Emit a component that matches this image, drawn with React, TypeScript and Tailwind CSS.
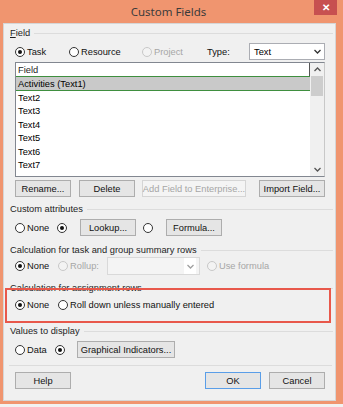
import React from "react";

const font = { fontFamily: '"Liberation Sans", Arial, sans-serif' };
const titleFont = { fontFamily: '"Noto Sans", "Segoe UI", sans-serif' };

function Radio({ checked, disabled }: { checked?: boolean; disabled?: boolean }) {
  return (
    <span
      className={`flex h-[10px] w-[10px] shrink-0 items-center justify-center rounded-full border ${
        disabled ? "border-[#c8c8c8] bg-[#f3f3f3]" : "border-[#333333] bg-white"
      }`}
    >
      {checked && <span className="h-[4px] w-[4px] rounded-full bg-[#111111]" />}
    </span>
  );
}

function Option({
  label,
  checked,
  disabled,
  w,
}: {
  label?: string;
  checked?: boolean;
  disabled?: boolean;
  w: string;
}) {
  return (
    <div className={`flex shrink-0 items-center gap-[2px] whitespace-nowrap ${w}`}>
      <Radio checked={checked} disabled={disabled} />
      {label && (
        <span className={disabled ? "text-[#a6a6a6]" : "text-[#111111]"}>{label}</span>
      )}
    </div>
  );
}

function Btn({
  children,
  w,
  disabled,
  focused,
}: {
  children: React.ReactNode;
  w: string;
  disabled?: boolean;
  focused?: boolean;
}) {
  const look = disabled
    ? "border-[#d5d5d5] bg-[#f4f4f4] text-[#a6a6a6]"
    : focused
    ? "border-[#5a9ee8] bg-[#e5e5e5] text-[#111111]"
    : "border-[#adadad] bg-[#e5e5e5] text-[#111111]";
  return (
    <div
      className={`flex h-[17px] shrink-0 items-center justify-center whitespace-nowrap border ${look} ${w}`}
    >
      {children}
    </div>
  );
}

function GroupLabel({ text, first }: { text: string; first?: boolean }) {
  return (
    <div className="ml-[-5px] mr-[-8px] flex h-[14px] items-center gap-[4px] whitespace-nowrap">
      <span className="text-[#1e1e1e]">
        {first ? (
          <>
            <span className="underline">F</span>ield
          </>
        ) : (
          text
        )}
      </span>
      <div className="h-px flex-1 bg-[#dcdcdc]" />
    </div>
  );
}

function Chevron({ up, color = "#555555" }: { up?: boolean; color?: string }) {
  return (
    <svg width="7" height="5" viewBox="0 0 7 5">
      <polyline
        points={up ? "0.5,4 3.5,1 6.5,4" : "0.5,1 3.5,4 6.5,1"}
        fill="none"
        stroke={color}
        strokeWidth="1.3"
      />
    </svg>
  );
}

const rows = ["Text2", "Text3", "Text4", "Text5", "Text6", "Text7", "Text8"];

export default function App() {
  return (
    <div className="h-[407px] w-[343px] overflow-hidden bg-[#f2f2f2]" style={font}>
      <div className="flex h-[404px] flex-col bg-[#f0956f]">
        {/* title bar */}
        <div className="flex h-[23px] shrink-0 items-start">
          <div
            className="flex h-[23px] flex-1 items-center justify-center pl-[23px] text-[11.5px] text-[#3b3b3b]"
            style={titleFont}
          >
            Custom Fields
          </div>
          <div className="flex h-[15px] w-[23px] items-center justify-center bg-[#c75050] text-[10px] font-bold text-white">
            ✕
          </div>
          <div className="w-[6px]" />
        </div>

        {/* dialog body */}
        <div className="relative ml-[3px] mr-[7px] flex h-[378px] flex-col border border-[#d6d6d6] bg-[#f0f0f0] pl-[11px] pr-[10px] text-[9.3px] leading-[14px]">
          <div className="mt-[2px]">
            <GroupLabel text="Field" first />
          </div>

          <div className="mt-[3px] flex h-[17px] items-center">
            <Option label="Task" checked w="w-[54px]" />
            <Option label="Resource" w="w-[73px]" />
            <Option label="Project" disabled w="w-[65px]" />
            <span className="w-[42px] text-[#111111]">Type:</span>
            <div className="flex h-[17px] w-[76px] items-center justify-between border border-[#abadb3] bg-white pl-[4px] pr-[3px]">
              <span>Text</span>
              <Chevron color="#333333" />
            </div>
          </div>

          {/* list */}
          <div className="mt-[2px] flex h-[115px] border border-[#828790] border-r-[#c8c8c8] bg-white">
            <div className="flex flex-1 flex-col overflow-hidden">
              <div className="flex h-[13px] shrink-0 items-center border-r border-[#555555] pl-[2px] text-[#1e1e1e]">
                Field
              </div>
              <div className="flex h-[15px] shrink-0 items-center border-y-[1.5px] border-[#3f8f3f] bg-[#c9c9c9] pl-[2px]">
                Activities (Text1)
              </div>
              {rows.map((r) => (
                <div key={r} className="flex h-[13.5px] shrink-0 items-center pl-[2px]">
                  {r}
                </div>
              ))}
            </div>
            <div className="flex w-[14px] flex-col items-center bg-[#f0f0f0]">
              <div className="flex h-[13px] items-center">
                <Chevron up />
              </div>
              <div className="h-[20px] w-[12px] bg-[#cdcdcd]" />
              <div className="flex-1" />
              <div className="flex h-[13px] items-center">
                <Chevron />
              </div>
            </div>
          </div>

          <div className="mt-[3px] flex items-center">
            <Btn w="w-[56px]">Rename...</Btn>
            <div className="w-[8px]" />
            <Btn w="w-[56px]">Delete</Btn>
            <div className="w-[7px]" />
            <Btn w="w-[104px]" disabled>
              Add Field to Enterprise...
            </Btn>
            <div className="flex-1" />
            <Btn w="w-[66px]">Import Field...</Btn>
          </div>

          <div className="mt-[5px]">
            <GroupLabel text="Custom attributes" />
          </div>
          <div className="mt-[3px] flex h-[17px] items-center">
            <Option label="None" w="w-[42px]" />
            <Option w="w-[23px]" checked />
            <Btn w="w-[56px]">Lookup...</Btn>
            <div className="w-[7px]" />
            <Option w="w-[23px]" />
            <Btn w="w-[56px]">Formula...</Btn>
          </div>

          <div className="mt-[7px]">
            <GroupLabel text="Calculation for task and group summary rows" />
          </div>
          <div className="flex h-[18px] items-center">
            <Option label="None" checked w="w-[43px]" />
            <Option label="Rollup:" disabled w="w-[49px]" />
            <div className="flex h-[18px] w-[93px] items-center justify-end border border-[#d9d9d9] bg-[#f4f4f4] pr-[3px]">
              <div className="flex h-full w-[12px] items-center justify-center bg-white">
                <Chevron color="#a0a0a0" />
              </div>
            </div>
            <div className="w-[7px]" />
            <Option label="Use formula" disabled w="w-[80px]" />
          </div>

          <div className="mt-[6px]">
            <GroupLabel text="Calculation for assignment rows" />
          </div>
          <div className="mt-[1px] flex h-[17px] items-center">
            <Option label="None" checked w="w-[43px]" />
            <Option label="Roll down unless manually entered" w="w-[200px]" />
          </div>

          <div className="mt-[11px]">
            <GroupLabel text="Values to display" />
          </div>
          <div className="mt-[3px] flex h-[17px] items-center">
            <Option label="Data" w="w-[40px]" />
            <Option w="w-[22px]" checked />
            <Btn w="w-[98px]">Graphical Indicators...</Btn>
          </div>

          <div className="ml-[-6px] mr-[-7px] mt-[7px] h-px bg-[#dcdcdc]" />

          <div className="mt-[6px] flex items-center">
            <Btn w="w-[56px]">Help</Btn>
            <div className="flex-1" />
            <Btn w="w-[56px]" focused>
              OK
            </Btn>
            <div className="w-[8px]" />
            <Btn w="w-[56px]">Cancel</Btn>
          </div>

          {/* annotation box */}
          <div className="pointer-events-none absolute left-[1px] top-[264px] h-[35px] w-[326px] border-2 border-[#e8584b]" />
        </div>
      </div>
    </div>
  );
}
